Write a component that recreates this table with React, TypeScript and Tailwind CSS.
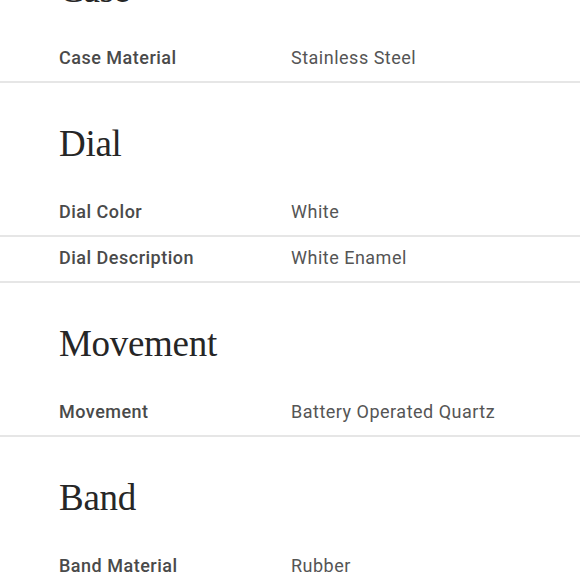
const sections = [
  { title: "Case", rows: [["Case Material", "Stainless Steel"]] },
  {
    title: "Dial",
    rows: [
      ["Dial Color", "White"],
      ["Dial Description", "White Enamel"],
    ],
  },
  { title: "Movement", rows: [["Movement", "Battery Operated Quartz"]] },
  { title: "Band", rows: [["Band Material", "Rubber"]] },
];

export default function App() {
  return (
    <div className="h-[580px] w-[580px] overflow-hidden bg-white">
      <div className="-mt-[71px]">
        {sections.map((s) => (
          <section key={s.title}>
            <h2 className="px-[59px] pt-[41px] pb-[27px] font-['Liberation_Serif',serif] text-[37px] leading-[40px] tracking-[-0.3px] text-[#262626]">
              {s.title}
            </h2>
            {s.rows.map(([label, value]) => (
              <div
                key={label}
                className="flex h-[46px] items-center border-b-2 border-[#e6e6e6] pb-[4px] pl-[59px] font-['Roboto',sans-serif] text-[18px] tracking-[0.5px]"
              >
                <span className="w-[232px] font-medium text-[#4a4a4a]">{label}</span>
                <span className="text-[#555555]">{value}</span>
              </div>
            ))}
          </section>
        ))}
      </div>
    </div>
  );
}
